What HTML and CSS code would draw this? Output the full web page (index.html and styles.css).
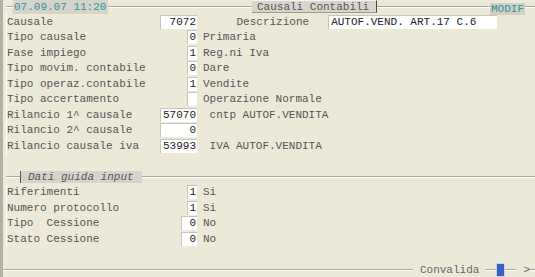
FILE: index.html
```html
<!DOCTYPE html>
<html>

<head>
	<title>Causali Contabili</title>
	<link rel="stylesheet" href="styles.css">
</head>

<body>
	<div class="screen">
		<!-- Barra titolo -->
		<div class="head">
			<span class="seg lead"></span>
			<span class="chip date">07.09.07 11:20</span>
			<span class="seg seg-a"></span>
			<span class="chip title">Causali Contabili</span>
			<span class="seg seg-b"></span>
			<span class="chip mode">MODIF</span>
			<span class="seg fill"></span>
		</div>

		<!-- Dati causale -->
		<div class="group">
			<div class="row">
				<span class="lbl">Causale</span>
				<span class="cell"><span class="box w5">7072</span></span>
				<span class="desc desc-label">Descrizione</span>
				<span class="box long">AUTOF.VEND. ART.17 C.6</span>
			</div>
			<div class="row">
				<span class="lbl">Tipo causale</span>
				<span class="cell"><span class="box w1">0</span></span>
				<span class="desc">Primaria</span>
			</div>
			<div class="row">
				<span class="lbl">Fase impiego</span>
				<span class="cell"><span class="box w1">1</span></span>
				<span class="desc">Reg.ni Iva</span>
			</div>
			<div class="row">
				<span class="lbl">Tipo movim. contabile</span>
				<span class="cell"><span class="box w1">0</span></span>
				<span class="desc">Dare</span>
			</div>
			<div class="row">
				<span class="lbl">Tipo operaz.contabile</span>
				<span class="cell"><span class="box w1">1</span></span>
				<span class="desc">Vendite</span>
			</div>
			<div class="row">
				<span class="lbl">Tipo accertamento</span>
				<span class="cell"><span class="box w1"></span></span>
				<span class="desc">Operazione Normale</span>
			</div>
			<div class="row">
				<span class="lbl">Rilancio 1^ causale</span>
				<span class="cell"><span class="box w5">57070</span></span>
				<span class="desc"> cntp AUTOF.VENDITA</span>
			</div>
			<div class="row">
				<span class="lbl">Rilancio 2^ causale</span>
				<span class="cell"><span class="box w5">0</span></span>
			</div>
			<div class="row">
				<span class="lbl">Rilancio causale iva</span>
				<span class="cell"><span class="box w5">53993</span></span>
				<span class="desc"> IVA AUTOF.VENDITA</span>
			</div>
		</div>

		<!-- Dati guida input -->
		<div class="sub-head">
			<span class="seg lead-2"></span>
			<span class="chip sub">Dati guida input</span>
			<span class="seg fill"></span>
		</div>
		<div class="group group-2">
			<div class="row">
				<span class="lbl">Riferimenti</span>
				<span class="cell"><span class="box w1">1</span></span>
				<span class="desc">Si</span>
			</div>
			<div class="row">
				<span class="lbl">Numero protocollo</span>
				<span class="cell"><span class="box w1">1</span></span>
				<span class="desc">Si</span>
			</div>
			<div class="row">
				<span class="lbl">Tipo  Cessione</span>
				<span class="cell"><span class="box w2">0</span></span>
				<span class="desc">No</span>
			</div>
			<div class="row">
				<span class="lbl">Stato Cessione</span>
				<span class="cell"><span class="box w2">0</span></span>
				<span class="desc">No</span>
			</div>
		</div>

		<!-- Barra comandi -->
		<div class="foot">
			<span class="seg fill"></span>
			<span class="cmd">Convalida</span>
			<span class="seg short"></span>
			<span class="thumb"></span>
			<span class="seg short-2"></span>
			<span class="arrow">&gt;</span>
			<span class="seg end"></span>
		</div>
	</div>
</body>

</html>
```

FILE: styles.css
```css
body {
	margin: 0;
	background-color: #ece9d8;
	font-family: "Liberation Mono", "Courier New", monospace;
	font-size: 11px;
	color: #555;
}

.screen {
	width: 532px;
	height: 277px;
	border-left: 3px solid #b3b0a4;
	display: flex;
	flex-direction: column;
	overflow: hidden;
}

/* linee incise */
.seg {
	display: block;
	height: 0;
	border-top: 1px solid #aca899;
	border-bottom: 1px solid #fff;
}

.fill {
	flex: 1;
}

.head {
	display: flex;
	align-items: center;
	height: 14px;
}

.lead {
	margin-left: 3px;
	width: 7px;
}

.seg-a {
	width: 144px;
}

.seg-b {
	width: 113px;
}

.chip {
	display: block;
	box-sizing: border-box;
	white-space: pre;
	line-height: 12px;
}

.date {
	width: 95px;
	height: 14px;
	padding: 1px 0 0 1px;
	background-color: #d6d3cb;
	color: #2f9494;
}

.title {
	width: 125px;
	height: 13px;
	align-self: flex-start;
	padding-left: 5px;
	background-color: #d8d5cd;
	border-top: 1px solid #f4f3ee;
	border-right: 1px solid #4a4a4a;
	border-bottom: 1px solid #9d9a8f;
}

.mode {
	width: 35px;
	height: 12px;
	margin-top: 4px;
	padding-left: 1px;
	background-color: #d2cfc7;
	color: #2f9494;
}

.group {
	margin-left: 3px;
	border-left: 1px solid #fff;
}

.row {
	display: flex;
	align-items: center;
	height: 15.5px;
	white-space: pre;
}

.lbl {
	width: 153px;
}

.cell {
	width: 37px;
	display: flex;
	justify-content: flex-end;
}

.box {
	box-sizing: border-box;
	height: 14px;
	line-height: 13px;
	padding-right: 1px;
	text-align: right;
	background-color: #fff;
	border-top: 1px solid #c9c6b9;
	border-left: 1px solid #c9c6b9;
	color: #222;
}

.w1 {
	width: 10px;
}

.w2 {
	width: 16px;
}

.w5 {
	width: 37px;
}

.long {
	width: 169px;
	margin-left: 19px;
	padding-left: 2px;
	text-align: left;
}

.desc {
	margin-left: 6px;
}

.desc-label {
	margin-left: 39.5px;
}

.sub-head {
	display: flex;
	align-items: center;
	height: 14px;
	margin-top: 16.5px;
}

.lead-2 {
	margin-left: 3px;
	width: 14px;
}

.sub {
	width: 122px;
	height: 12px;
	padding-left: 7px;
	background-color: #d6d3cb;
	border-left: 1px solid #555;
	font-style: italic;
}

.group-2 {
	margin-top: 0.5px;
}

.foot {
	display: flex;
	align-items: center;
	height: 14px;
	margin-top: auto;
}

.cmd {
	margin: 0 7px 0 7px;
	color: #666;
}

.short {
	width: 10px;
}

.short-2 {
	width: 11px;
}

.thumb {
	box-sizing: border-box;
	width: 9px;
	height: 14px;
	background-color: #3264c8;
	border: 1px solid #d0cfe0;
}

.arrow {
	margin-left: 7px;
	color: #666;
}

.end {
	width: 5px;
}
```
